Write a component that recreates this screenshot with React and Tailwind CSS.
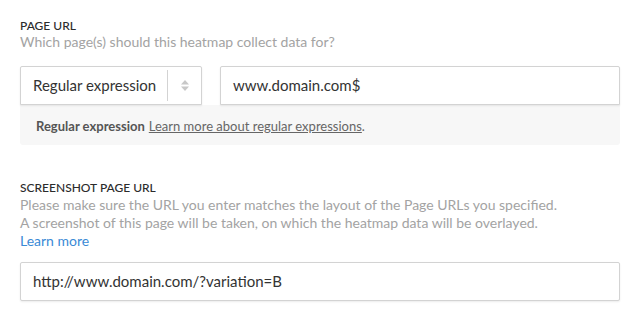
export default function App() {
  return (
    <div className="min-h-screen bg-white px-5 pt-5 font-['Lato',sans-serif] text-[#333]">
      {/* Page URL */}
      <div>
        <h4 className="text-[12px] leading-[12px] font-medium uppercase text-[#2b2b2b]">Page URL</h4>
        <p className="mt-[3px] text-[14px] leading-[14px] text-[#a3a3a3]">
          Which page(s) should this heatmap collect data for?
        </p>

        <div className="mt-[17px] flex gap-[18px]">
          <div className="flex h-[39px] w-[182px] items-center rounded-t-[2px] border border-[#d3d3d3] bg-white shadow-[0_1px_2px_rgba(0,0,0,0.08)]">
            <span className="flex-1 pl-3 text-[15px] text-[#333]">Regular expression</span>
            <span className="h-[31px] w-px bg-[#d3d3d3]" />
            <span className="flex w-[33px] justify-center">
              <svg width="8" height="11" viewBox="0 0 8 11" fill="#c8c8c8">
                <path d="M4 0 L8 4.5 H0 Z" />
                <path d="M0 6.5 H8 L4 11 Z" />
              </svg>
            </span>
          </div>
          <div className="flex h-[39px] flex-1 items-center rounded-t-[2px] border border-[#d3d3d3] bg-white pl-3 text-[15px] shadow-[0_1px_2px_rgba(0,0,0,0.08)]">
            www.domain.com$
          </div>
        </div>

        <div className="flex h-10 items-center rounded-b-[3px] bg-[#f7f7f7] px-4 pt-[3px] text-[13px] text-[#666]">
          <span className="font-bold text-[#555]">Regular expression</span>
          <span className="ml-1">
            <a href="#" className="underline">Learn more about regular expressions</a>.
          </span>
        </div>
      </div>

      {/* Screenshot page URL */}
      <div className="mt-[37px]">
        <h4 className="text-[12px] leading-[12px] font-medium uppercase text-[#2b2b2b]">Screenshot Page URL</h4>
        <div className="mt-[2px] text-[14px] leading-[18px] text-[#a3a3a3]">
          <p>Please make sure the URL you enter matches the layout of the Page URLs you specified.</p>
          <p>A screenshot of this page will be taken, on which the heatmap data will be overlayed.</p>
          <a href="#" className="text-[#3a8ad6]">Learn more</a>
        </div>

        <div className="mt-3 flex h-[39px] items-center rounded-[2px] border border-[#d3d3d3] bg-white pl-3 text-[15px] shadow-[0_1px_2px_rgba(0,0,0,0.08)]">
          http://www.domain.com/?variation=B
        </div>
      </div>
    </div>
  );
}
